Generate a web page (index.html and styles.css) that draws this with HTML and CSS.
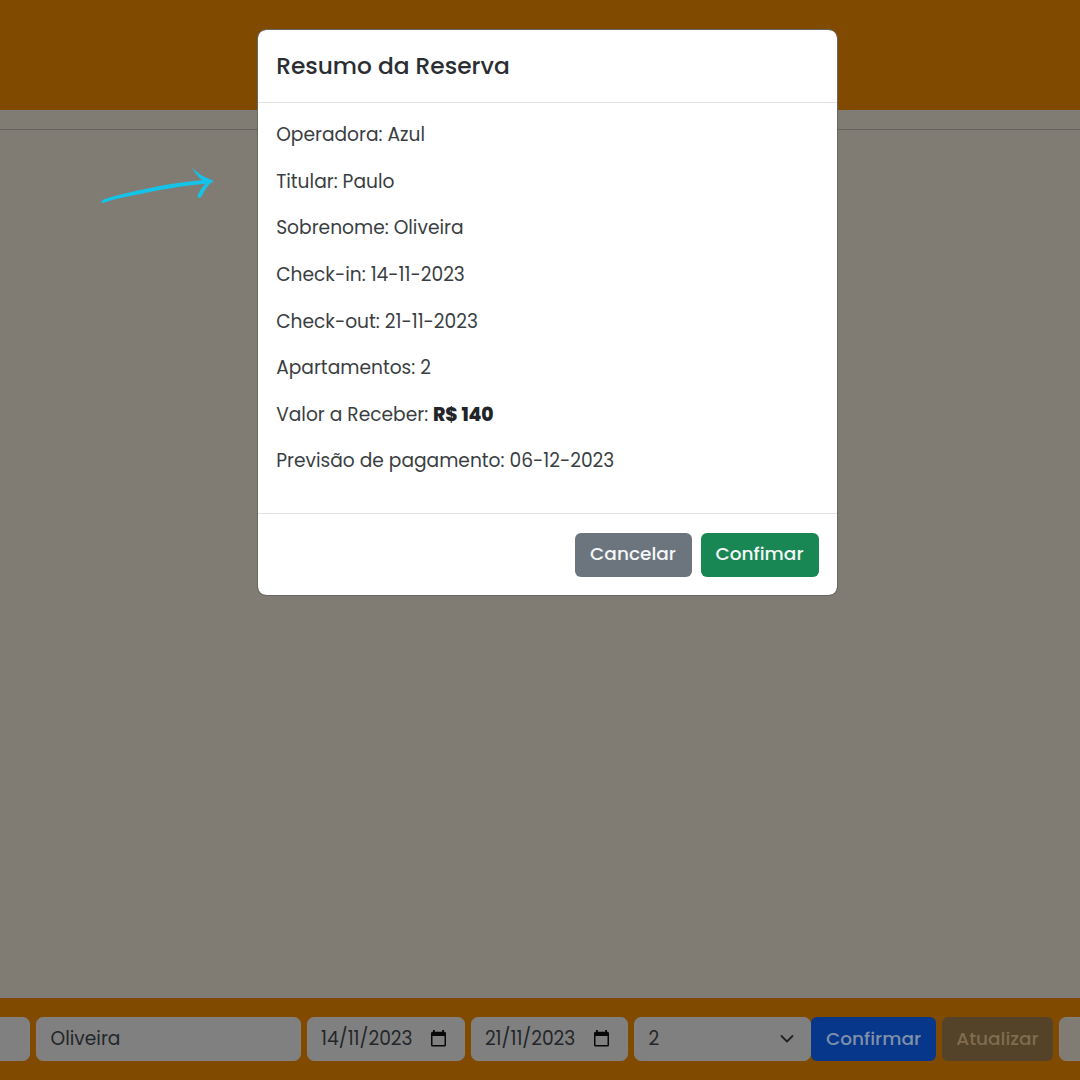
FILE: index.html
```html
<!DOCTYPE html>
<html lang="pt-BR">
<head>
<meta charset="utf-8">
<title>Resumo da Reserva</title>
<link rel="stylesheet" href="styles.css">
</head>
<body>
<div class="page">
  <header class="topbar"></header>
  <main class="content"><div class="rule"></div></main>
  <footer class="toolbar">
    <div class="field field-first"></div>
    <div class="field field-name"><span>Oliveira</span></div>
    <div class="field field-in"><span class="date">14/11/2023</span>
      <svg class="calendar" viewBox="0 0 15 17"><path fill-rule="evenodd" d="M2 0h1.800v1.700h7.400V0H13v1.700h.5Q15 1.700 15 3.200V15Q15 16.500 13.500 16.500h-12Q0 16.500 0 15V3.200Q0 1.700 1.500 1.700H2zM1.500 6v9h12V6z"/></svg>
    </div>
    <div class="field field-out"><span class="date">21/11/2023</span>
      <svg class="calendar" viewBox="0 0 15 17"><path fill-rule="evenodd" d="M2 0h1.800v1.700h7.400V0H13v1.700h.5Q15 1.700 15 3.200V15Q15 16.500 13.500 16.500h-12Q0 16.500 0 15V3.200Q0 1.700 1.500 1.700H2zM1.500 6v9h12V6z"/></svg>
    </div>
    <div class="field field-rooms"><span>2</span>
      <svg class="chevron" viewBox="0 0 14 10"><path d="M1.500 2 7 7.500 12.500 2"/></svg>
    </div>
    <div class="btn btn-primary"><span>Confirmar</span></div>
    <div class="btn btn-update"><span>Atualizar</span></div>
    <div class="field field-last"></div>
  </footer>
</div>

<svg class="arrow" viewBox="0 0 120 44"><path d="M1.300 36C8 31.500 29 27.500 45 24C62 20.500 80 17 106 14.800L109 18.500C89 20 64 24 45 28C30 31 14 34 4 37.800Q1 38.500 1.300 36Z"/><path d="M91.500 2Q99 10.500 112.500 15.300L113 17L108 19Q98 14 91.500 2Z"/><path d="M113.300 15.300Q106 22 101.500 31.500Q100 33.500 98 32.500Q97 31.500 98 29.500Q101.500 22 107 17Z"/></svg>

<section class="modal">
  <div class="modal-header"><h1>Resumo da Reserva</h1></div>
  <div class="modal-body">
    <p>Operadora: Azul</p>
    <p>Titular: Paulo</p>
    <p>Sobrenome: Oliveira</p>
    <p>Check-in: 14-11-2023</p>
    <p>Check-out: 21-11-2023</p>
    <p>Apartamentos: 2</p>
    <p>Valor a Receber: <strong>R$ 140</strong></p>
    <p>Previsão de pagamento: 06-12-2023</p>
  </div>
  <div class="modal-footer">
    <div class="btn btn-cancel"><span>Cancelar</span></div>
    <div class="btn btn-ok"><span>Confimar</span></div>
  </div>
</section>
</body>
</html>
```
FILE: styles.css
```css
* { box-sizing: border-box; }
body {
  margin: 0;
  overflow: hidden;
  font-family: Poppins, Inter, sans-serif;
  font-weight: 400;
  font-size: 18.64px;
  line-height: 28px;
  color: #212529;
}
.page { height: 1080px; display: flex; flex-direction: column; background: #807b73; }
.topbar { height: 110px; background: #804b00; }
.content { flex: 1; padding-top: 18.6px; }
.rule { height: 1px; background: #65625d; }
.toolbar { height: 82px; background: #804b00; display: flex; align-items: center; overflow: hidden; }
.field {
  height: 44px;
  flex: none;
  display: flex;
  align-items: center;
  padding: 0 15px 1px;
  margin-right: 6px;
  border: 1px solid #85817c;
  border-radius: 7px;
  background: #808080;
  color: #23262a;
  white-space: nowrap;
}
.field-first { width: 37px; margin-left: -7.5px; }
.field-name { width: 265px; padding-left: 14px; }
.field-in { width: 158px; justify-content: space-between; padding-left: 13.6px; padding-right: 18px; }
.field-out { width: 157px; justify-content: space-between; padding-left: 13.4px; padding-right: 18px; }
.field-rooms { width: 177.5px; justify-content: space-between; padding-left: 14px; padding-right: 16px; margin-right: 0; }
.field-last { width: 60px; background: #807b73; }
.calendar { width: 15px; height: 17px; fill: #070707; }
.chevron { width: 14px; height: 10px; fill: none; stroke: #1f2225; stroke-width: 1.8; stroke-linecap: round; stroke-linejoin: round; }
.btn {
  height: 44px;
  flex: none;
  display: flex;
  align-items: center;
  justify-content: center;
  padding-bottom: 1px;
  border-radius: 6px;
  font-weight: 500;
  font-size: 18.5px;
  white-space: nowrap;
}
.btn-primary { width: 125px; margin-right: 6px; background: #06378a; color: #8090aa; }
.btn-update { width: 111px; margin-right: 6px; background: #544229; color: #806c50; }
.arrow { position: absolute; left: 100px; top: 165px; width: 120px; height: 44px; fill: #15c2e8; }
.modal {
  position: absolute;
  left: 257px;
  top: 29px;
  width: 581px;
  height: 567px;
  border: 1px solid #696560;
  border-radius: 9px;
  background: #fff;
  background-clip: padding-box;
}
.modal-header { height: 73px; display: flex; align-items: center; padding: 0 18.2px; border-bottom: 1px solid #dee2e6; }
h1 { margin: 0; font-size: 23.3px; font-weight: 500; line-height: 35px; white-space: nowrap; color: #2a2e32; }
.modal-body { height: 410px; padding: 18.3px 18.2px 0; color: #3a3e42; }
p { margin: 0 0 18.6px; height: 28px; white-space: pre; }
strong { font-weight: 800; letter-spacing: -0.1px; word-spacing: 0.5px; color: #212529; }
.modal-footer { height: 82px; display: flex; align-items: center; justify-content: flex-end; gap: 9px; padding: 0 18.5px 0; border-top: 1px solid #dee2e6; color: #f4f6f7; }
.btn-cancel { width: 117px; background: #6c757d; }
.btn-ok { width: 118px; background: #198754; }
```
